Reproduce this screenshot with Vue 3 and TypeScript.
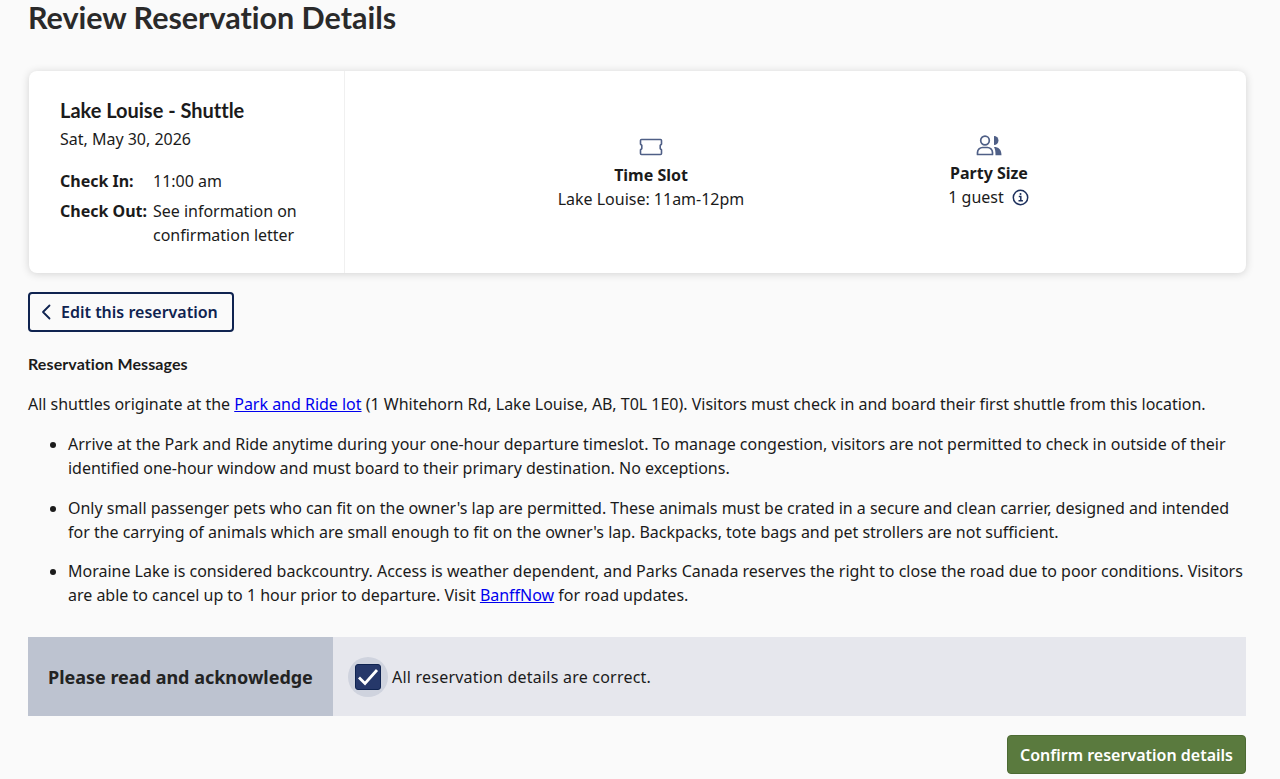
<script setup lang="ts">
const bullets = [
  "Arrive at the Park and Ride anytime during your one-hour departure timeslot. To manage congestion, visitors are not permitted to check in outside of their identified one-hour window and must board to their primary destination. No exceptions.",
  "Only small passenger pets who can fit on the owner's lap are permitted. These animals must be crated in a secure and clean carrier, designed and intended for the carrying of animals which are small enough to fit on the owner's lap. Backpacks, tote bags and pet strollers are not sufficient.",
];
</script>

<template>
  <main class="page">
    <h1 class="title">Review Reservation Details</h1>

    <section class="card">
      <div class="summary">
        <h2 class="place">Lake Louise - Shuttle</h2>
        <p class="date">Sat, May 30, 2026</p>
        <dl class="times">
          <dt>Check In:</dt>
          <dd>11:00 am</dd>
          <dt>Check Out:</dt>
          <dd>See information on confirmation letter</dd>
        </dl>
      </div>
      <div class="facts">
        <div class="fact">
          <svg class="icon" width="26" height="22" viewBox="0 0 26 22" fill="none" stroke="#4f5f86" stroke-width="1.6" stroke-linejoin="round">
            <path d="M3.500 3.500h19c.6 0 1 .4 1 1v3.600l-1.300 1.300v3.200l1.300 1.300v3.600c0 .6-.4 1-1 1h-19c-.6 0-1-.4-1-1v-3.600l1.300-1.300V9.400L2.500 8.100V4.500c0-.6.4-1 1-1z" />
          </svg>
          <strong>Time Slot</strong>
          <span>Lake Louise: 11am-12pm</span>
        </div>
        <div class="fact fact-party">
          <svg class="icon" width="26" height="22" viewBox="0 0 26 22" fill="none" stroke="#4f5f86" stroke-width="1.7">
            <circle cx="9" cy="6.500" r="4.300" />
            <path d="M1.500 20.500v-2c0-3 2.500-5 5-5h5c2.500 0 5 2 5 5v2z" stroke-linejoin="round" />
            <path d="M18 2a4.500 4.500 0 0 1 0 9z" fill="#4f5f86" stroke="none" />
            <path d="M18 13c4.500 0 7.500 2.500 7.500 8.300h-6c0-3.500-.3-6.300-1.500-8.300z" fill="#4f5f86" stroke="none" />
          </svg>
          <strong>Party Size</strong>
          <span class="guest">1 guest
            <svg class="info" width="17" height="17" viewBox="0 0 17 17" fill="none" stroke="#1c2f5c" stroke-width="1.500">
              <circle cx="8.500" cy="8.500" r="7.200" />
              <path d="M6.800 7.600h2v4.200M6.500 11.800h4.400" />
              <circle cx="8.500" cy="5" r="1" fill="#1c2f5c" stroke="none" />
            </svg>
          </span>
        </div>
      </div>
    </section>

    <button class="edit" type="button">
      <svg width="10" height="16" viewBox="0 0 10 16" fill="none" stroke="#0f2350" stroke-width="1.800" stroke-linecap="round" stroke-linejoin="round">
        <path d="M8.500 1.500 2 8l6.500 6.500" />
      </svg>
      Edit this reservation
    </button>

    <h3 class="messages">Reservation Messages</h3>
    <p class="intro">All shuttles originate at the <a href="#">Park and Ride lot</a> (1 Whitehorn Rd, Lake Louise, AB, T0L 1E0). Visitors must check in and board their first shuttle from this location.</p>
    <ul class="list">
      <li v-for="b in bullets" :key="b">{{ b }}</li>
      <li>Moraine Lake is considered backcountry. Access is weather dependent, and Parks Canada reserves the right to close the road due to poor conditions. Visitors are able to cancel up to 1 hour prior to departure. Visit <a href="#">BanffNow</a> for road updates.</li>
    </ul>

    <section class="ack">
      <div class="ack-label">Please read and acknowledge</div>
      <div class="ack-body">
        <span class="halo">
          <span class="box">
            <svg width="24" height="24" viewBox="0 0 24 24" fill="none" stroke="#fff" stroke-width="2.800">
              <path d="M3 12.500 9 18.500 21 5" />
            </svg>
          </span>
        </span>
        <span>All reservation details are correct.</span>
      </div>
    </section>

    <div class="actions">
      <button class="confirm" type="button">Confirm reservation details</button>
    </div>
  </main>
</template>

<style>
html, body { margin: 0; background: #fafafa; }
</style>

<style scoped>
.page {
  box-sizing: border-box;
  height: 779px;
  overflow: hidden;
  padding: 0 34px 0 28px;
  background: #fafafa;
  color: #1b1b1b;
  font-family: "Noto Sans", sans-serif;
  font-size: 16px;
  line-height: 24px;
  letter-spacing: -0.012px;
}
.title {
  margin: 0;
  height: 71px;
  font-family: Lato, sans-serif;
  font-weight: 700;
  font-size: 30.500px;
  line-height: 34px;
  color: #2a2a2a;
}
.card {
  display: flex;
  height: 202px;
  margin-left: 1px;
  background: #fff;
  border-radius: 8px;
  box-shadow: 0 1px 8px rgba(0, 0, 0, 0.16);
}
.summary {
  box-sizing: border-box;
  width: 316px;
  padding: 26px 20px 0 31px;
  border-right: 1px solid #f0f0f0;
}
.place {
  margin: 0;
  font-family: Lato, sans-serif;
  font-weight: 700;
  font-size: 20px;
  line-height: 27px;
}
.date { margin: 1px 0 16px; line-height: 28px; }
.times {
  display: grid;
  grid-template-columns: 93px 1fr;
  row-gap: 6px;
  margin: 0;
}
.times dt { font-weight: 700; }
.times dd { margin: 0; }
.facts {
  flex: 1;
  display: grid;
  grid-template-columns: 338px 338px;
  align-items: center;
  padding-left: 137px;
}
.fact {
  display: flex;
  flex-direction: column;
  align-items: center;
  text-align: center;
  margin-top: 3px;
}
.fact-party { margin-top: 0; margin-bottom: 2px; }
.icon { margin-bottom: 5px; }
.fact strong { font-weight: 700; }
.guest { display: inline-flex; align-items: center; gap: 8px; margin-right: 1px; }
.info { margin-top: 2px; }
.edit {
  display: flex;
  align-items: center;
  gap: 10px;
  box-sizing: border-box;
  width: 206px;
  height: 40px;
  margin-top: 19px;
  padding: 0 0 0 11px;
  background: transparent;
  border: 2px solid #0f2350;
  border-radius: 4px;
  color: #0f2350;
  font-family: "Noto Sans", sans-serif;
  font-weight: 600;
  font-size: 16px;
}
.messages {
  margin: 20px 0 0;
  font-family: Lato, sans-serif;
  font-weight: 700;
  font-size: 16px;
  line-height: 24px;
  letter-spacing: 0.1px;
}
.intro { margin: 16px 0 0; }
a { color: #0000ee; text-decoration: underline; }
.list { margin: 16px 0 0; padding: 0 0 0 40px; }
.list li { margin-bottom: 15.600px; }
.list li:last-child { margin-bottom: 0; }
.ack {
  display: flex;
  height: 79px;
  margin-top: 30px;
  background: #e6e7ed;
}
.ack-label {
  box-sizing: border-box;
  width: 305px;
  padding-left: 20px;
  display: flex;
  align-items: center;
  background: #bdc3d0;
  font-weight: 700;
  font-size: 18px;
  color: #232323;
}
.ack-body {
  display: flex;
  align-items: center;
  gap: 4px;
  padding-left: 15px;
  letter-spacing: 0.22px;
}
.halo {
  display: flex;
  align-items: center;
  justify-content: center;
  width: 40px;
  height: 40px;
  border-radius: 50%;
  background: #cfd3de;
}
.box {
  display: flex;
  align-items: center;
  justify-content: center;
  box-sizing: border-box;
  width: 26px;
  height: 26px;
  background: #26386a;
  border: 1px solid #0f2350;
  border-radius: 3px;
}
.actions { display: flex; justify-content: flex-end; margin-top: 19px; }
.confirm {
  width: 239px;
  height: 39px;
  padding: 0;
  background: #5a7a3e;
  border: 1px solid #4c6a33;
  border-radius: 4px;
  color: #fff;
  font-family: "Noto Sans", sans-serif;
  font-weight: 600;
  font-size: 16px;
}
</style>
